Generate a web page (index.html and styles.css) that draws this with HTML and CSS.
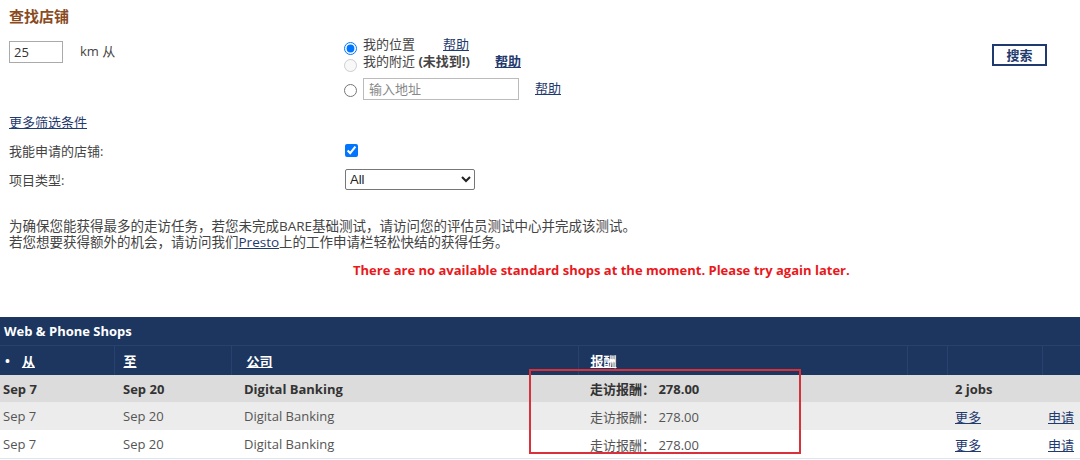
FILE: index.html
```html
<!DOCTYPE html>
<html lang="zh-CN">
<head>
    <meta charset="UTF-8">
    <title>查找店铺</title>
    <link rel="stylesheet" href="styles.css">
</head>
<body>
    <div class="top">
        <h1 class="title">查找店铺</h1>

        <div class="search-row">
            <div class="distance">
                <input class="km-input" type="text" value="25">
                <span class="km-label">km 从</span>
            </div>
            <div class="locations">
                <label class="loc">
                    <input type="radio" name="loc" checked>
                    <span>我的位置</span>
                    <a href="#" class="help">帮助</a>
                </label>
                <label class="loc">
                    <input type="radio" name="loc" disabled>
                    <span>我的附近 <b>(未找到!)</b></span>
                    <a href="#" class="help help-near"><b>帮助</b></a>
                </label>
                <label class="loc loc-addr">
                    <input type="radio" name="loc">
                    <input class="addr-input" type="text" placeholder="输入地址">
                    <a href="#" class="help help-addr">帮助</a>
                </label>
            </div>
            <div class="actions">
                <button class="search-btn">搜索</button>
            </div>
        </div>

        <a href="#" class="more-link">更多筛选条件</a>

        <div class="filter">
            <span class="filter-label">我能申请的店铺:</span>
            <input class="check" type="checkbox" checked>
        </div>
        <div class="filter filter-type">
            <span class="filter-label">项目类型:</span>
            <select class="type-select">
                <option>All</option>
            </select>
        </div>

        <p class="notice">
            为确保您能获得最多的走访任务，若您未完成BARE基础测试，请访问您的评估员测试中心并完成该测试。<br>
            若您想要获得额外的机会，请访问我们<a href="#">Presto</a>上的工作申请栏轻松快结的获得任务。
        </p>

        <p class="no-shops">There are no available standard shops at the moment. Please try again later.</p>
    </div>

    <div class="table-wrap">
        <table class="shops">
            <colgroup>
                <col style="width: 114px">
                <col style="width: 117px">
                <col style="width: 347px">
                <col style="width: 329px">
                <col style="width: 40px">
                <col style="width: 95px">
                <col style="width: 38px">
            </colgroup>
            <thead>
                <tr class="caption-row">
                    <th colspan="7">Web &amp; Phone Shops</th>
                </tr>
                <tr class="head-row">
                    <th><span class="bullet">&bull;</span><a href="#">从</a></th>
                    <th><a href="#">至</a></th>
                    <th><a href="#">公司</a></th>
                    <th><a href="#">报酬</a></th>
                    <th></th>
                    <th></th>
                    <th></th>
                </tr>
            </thead>
            <tbody>
                <tr class="group-row">
                    <td>Sep 7</td>
                    <td>Sep 20</td>
                    <td>Digital Banking</td>
                    <td>走访报酬：&nbsp;278.00</td>
                    <td></td>
                    <td>2 jobs</td>
                    <td></td>
                </tr>
                <tr class="odd">
                    <td>Sep 7</td>
                    <td>Sep 20</td>
                    <td>Digital Banking</td>
                    <td>走访报酬：&nbsp;278.00</td>
                    <td></td>
                    <td><a href="#">更多</a></td>
                    <td><a href="#">申请</a></td>
                </tr>
                <tr class="even">
                    <td>Sep 7</td>
                    <td>Sep 20</td>
                    <td>Digital Banking</td>
                    <td>走访报酬：&nbsp;278.00</td>
                    <td></td>
                    <td><a href="#">更多</a></td>
                    <td><a href="#">申请</a></td>
                </tr>
            </tbody>
        </table>
        <div class="highlight"></div>
    </div>
</body>
</html>
```

FILE: styles.css
```css
body {
    margin: 0;
    padding: 0;
    background: white;
    color: #444;
    font-family: "Open Sans", "Noto Sans CJK SC", sans-serif;
    font-size: 13px;
}

a {
    color: #1f3a6e;
}

.top {
    padding: 6px 9px 0;
}

.title {
    margin: 0;
    font-size: 15px;
    line-height: 20px;
    color: #8a4b1f;
    font-weight: bold;
}

.search-row {
    display: grid;
    grid-template-columns: 335px 1fr auto;
    margin-top: 15px;
}

.distance {
    display: flex;
    align-items: flex-start;
}

.km-input {
    box-sizing: border-box;
    width: 54px;
    height: 22px;
    margin: 0;
    padding: 0 4px;
    border: 1px solid #aaa;
    font-family: inherit;
    font-size: 13px;
    color: #333;
}

.km-label {
    margin-left: 17px;
    line-height: 20px;
}

.locations {
    display: flex;
    flex-direction: column;
    margin-top: -5px;
}

.loc {
    display: flex;
    align-items: flex-start;
    height: 17px;
    line-height: 17px;
}

.loc input[type="radio"] {
    width: 13px;
    height: 13px;
    margin: 6px 6px 0 0;
}

.loc-addr {
    align-items: center;
    height: 22px;
    margin-top: 8px;
}

.loc-addr input[type="radio"] {
    margin-top: 2px;
}

.addr-input {
    box-sizing: border-box;
    width: 156px;
    height: 22px;
    margin: 0;
    padding: 0 5px;
    border: 1px solid #bbb;
    font-family: inherit;
    font-size: 13px;
}

.addr-input::placeholder {
    color: #888;
}

.help {
    margin-left: 28px;
}

.help-near {
    margin-left: 25px;
}

.help-addr {
    margin-left: 16px;
    position: relative;
    top: -1px;
}

.actions {
    padding-right: 24px;
}

.search-btn {
    margin-top: 3px;
    width: 55px;
    height: 22px;
    padding: 0;
    background: white;
    border: 2px solid #1f3a6e;
    color: #1f3a6e;
    font-family: inherit;
    font-size: 13px;
    font-weight: bold;
    line-height: 16px;
}

.more-link {
    display: inline-block;
    margin-top: 14px;
    line-height: 16px;
}

.filter {
    display: flex;
    align-items: center;
    margin-top: 11px;
    height: 16px;
}

.filter-label {
    width: 336px;
    flex-shrink: 0;
}

.check {
    width: 13px;
    height: 13px;
    margin: 0;
}

.filter-type {
    margin-top: 10px;
    height: 22px;
}

.type-select {
    width: 130px;
    height: 21px;
    font-family: "Liberation Sans", sans-serif;
    font-size: 13px;
    color: #222;
    border: 1px solid #777;
    border-radius: 2px;
    background: white;
}

.notice {
    margin: 28px 0 0;
    font-size: 13.5px;
    line-height: 16px;
    color: #444;
}

.no-shops {
    margin: 12px 0 0;
    padding-left: 344px;
    color: #e8181c;
    font-weight: bold;
    font-size: 13px;
    line-height: 16px;
}

.table-wrap {
    position: relative;
    margin-top: 39px;
}

.shops {
    width: 100%;
    table-layout: fixed;
    border-collapse: collapse;
}

.shops th {
    text-align: left;
    color: white;
    font-weight: bold;
    background: #1c365f;
}

.shops th a {
    color: white;
}

.caption-row th {
    height: 28px;
    padding: 0 4px;
    font-size: 13px;
    border-bottom: 1px solid #27426d;
}

.head-row th {
    height: 29px;
    padding: 0 9px;
    border-left: 1px solid #27426d;
}

.head-row th:first-child {
    padding-left: 5px;
    border-left: none;
}

.head-row th:nth-child(3) {
    padding-left: 15px;
}

.head-row th:nth-child(4) {
    padding-left: 12px;
}

.bullet {
    margin-right: 12px;
}

.shops td {
    height: 27px;
    padding: 0 9px;
    white-space: nowrap;
    color: #555;
}

.shops td:first-child {
    padding-left: 3px;
}

.shops td:nth-child(3) {
    padding-left: 13px;
}

.shops td:nth-child(4) {
    padding-left: 12px;
}

.shops td:nth-child(6) {
    padding-left: 8px;
}

.shops td:nth-child(7) {
    padding-left: 6px;
}

.group-row td {
    background: #dcdcdc;
    font-weight: bold;
    color: #333;
}

.odd td {
    background: #ececec;
    height: 28px;
}

.even td {
    background: white;
    height: 28px;
    border-bottom: 1px solid #dde6ee;
}

.highlight {
    position: absolute;
    left: 529px;
    top: 52px;
    width: 268px;
    height: 81px;
    border: 2px solid #d9303a;
    pointer-events: none;
}
```
